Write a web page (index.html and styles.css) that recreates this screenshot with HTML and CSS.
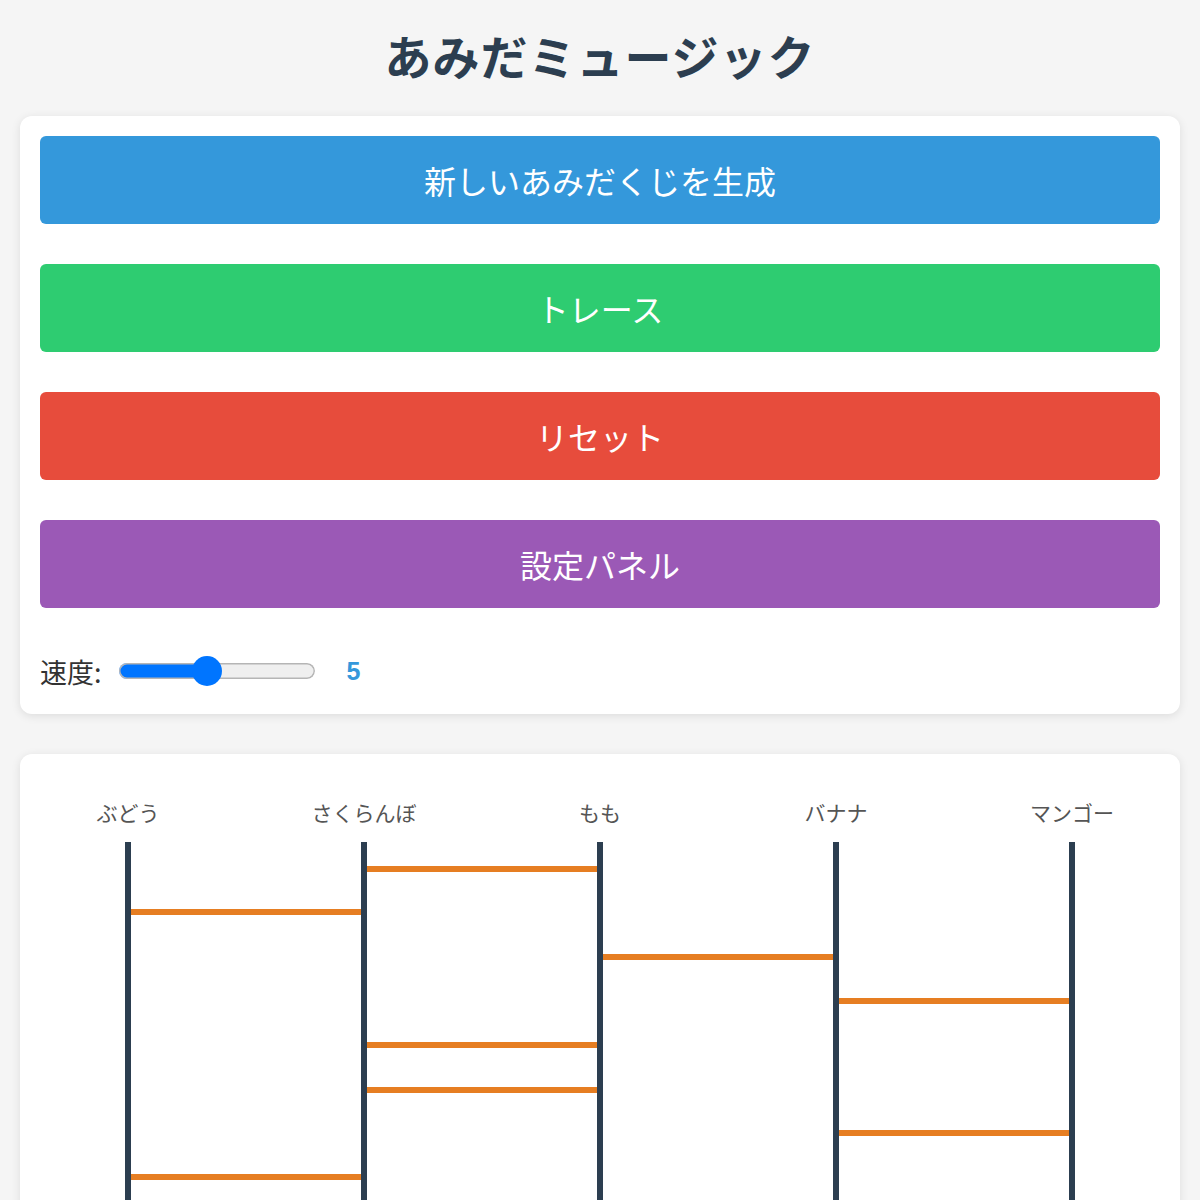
FILE: index.html
```html
<!DOCTYPE html>
<html lang="ja">
<head>
<meta charset="utf-8">
<title>あみだミュージック</title>
<link rel="stylesheet" href="styles.css">
</head>
<body>
<h1 class="title">あみだミュージック</h1>
<section class="card controls">
  <button class="btn btn-blue">新しいあみだくじを生成</button>
  <button class="btn btn-green">トレース</button>
  <button class="btn btn-red">リセット</button>
  <button class="btn btn-purple">設定パネル</button>
  <div class="speed-row">
    <label class="speed-label" for="speed">速度:</label>
    <input class="speed-range" id="speed" type="range" min="1" max="10" value="5" style="--fill: 45.5%">
    <span class="speed-value">5</span>
  </div>
</section>
<section class="card board">
  <svg class="ladder" width="1120" height="480" viewBox="0 0 1120 480">
    <g class="labels">
      <text x="88" y="47" text-anchor="middle">ぶどう</text>
      <text x="324" y="47" text-anchor="middle">さくらんぼ</text>
      <text x="560" y="47" text-anchor="middle">もも</text>
      <text x="796" y="47" text-anchor="middle">バナナ</text>
      <text x="1032" y="47" text-anchor="middle">マンゴー</text>
    </g>
    <g class="rungs">
      <line x1="324" y1="95" x2="560" y2="95"/>
      <line x1="88" y1="138" x2="324" y2="138"/>
      <line x1="560" y1="183" x2="796" y2="183"/>
      <line x1="796" y1="227" x2="1032" y2="227"/>
      <line x1="324" y1="271" x2="560" y2="271"/>
      <line x1="324" y1="316" x2="560" y2="316"/>
      <line x1="796" y1="359" x2="1032" y2="359"/>
      <line x1="88" y1="403" x2="324" y2="403"/>
    </g>
    <g class="rails">
      <line x1="88" y1="68" x2="88" y2="480"/>
      <line x1="324" y1="68" x2="324" y2="480"/>
      <line x1="560" y1="68" x2="560" y2="480"/>
      <line x1="796" y1="68" x2="796" y2="480"/>
      <line x1="1032" y1="68" x2="1032" y2="480"/>
    </g>
  </svg>
</section>
</body>
</html>
```

FILE: styles.css
```css
html, body {
  margin: 0;
  padding: 0;
}
body {
  background: #f5f5f5;
  padding: 0 20px 20px;
  font-family: "Noto Sans CJK JP", "Noto Sans", sans-serif;
  color: #2c3e50;
}
.title {
  margin: 26px 0 32px;
  height: 58px;
  line-height: 58px;
  text-align: center;
  font-size: 47px;
  font-weight: 700;
  letter-spacing: 1px;
  color: #2c3e50;
}
.card {
  background: #fff;
  border-radius: 12px;
  box-shadow: 0 2px 10px rgba(0, 0, 0, 0.1);
  padding: 20px;
}
.controls {
  display: flex;
  flex-direction: column;
  gap: 40px;
}
.btn {
  display: block;
  width: 100%;
  height: 88px;
  border: none;
  border-radius: 6px;
  color: #fff;
  font-family: "Noto Sans CJK JP", "Noto Sans", sans-serif;
  font-size: 32px;
  font-weight: 400;
  padding: 0;
}
.btn-blue { background: #3498db; }
.btn-green { background: #2ecc71; }
.btn-red { background: #e74c3c; }
.btn-purple { background: #9b59b6; }
.speed-row {
  display: flex;
  align-items: center;
  height: 46px;
}
.speed-label {
  font-size: 27px;
  color: #333;
  margin-right: 17px;
}
.speed-range {
  -webkit-appearance: none;
  appearance: none;
  width: 196px;
  height: 32px;
  margin: 0;
  padding: 0;
  background: transparent;
}
.speed-range::-webkit-slider-runnable-track {
  height: 16px;
  border-radius: 8px;
  box-shadow: inset 0 0 0 1.5px #b5b5b5;
  background:
    linear-gradient(#0075ff, #0075ff) no-repeat 0 0 / var(--fill) 100%,
    #efefef;
}
.speed-range::-webkit-slider-thumb {
  -webkit-appearance: none;
  appearance: none;
  width: 30px;
  height: 30px;
  margin-top: -7px;
  border: none;
  border-radius: 50%;
  background: #0075ff;
}
.speed-value {
  margin-left: 32px;
  font-family: "Liberation Sans", Arial, sans-serif;
  font-size: 25px;
  font-weight: 700;
  color: #3498db;
}
.board {
  margin-top: 40px;
}
.ladder {
  display: block;
}
.labels text {
  font-family: "Noto Sans CJK JP", "Noto Sans", sans-serif;
  font-size: 21px;
  fill: #555;
}
.rungs line {
  stroke: #e67e22;
  stroke-width: 6;
}
.rails line {
  stroke: #2c3e50;
  stroke-width: 6;
}
```
